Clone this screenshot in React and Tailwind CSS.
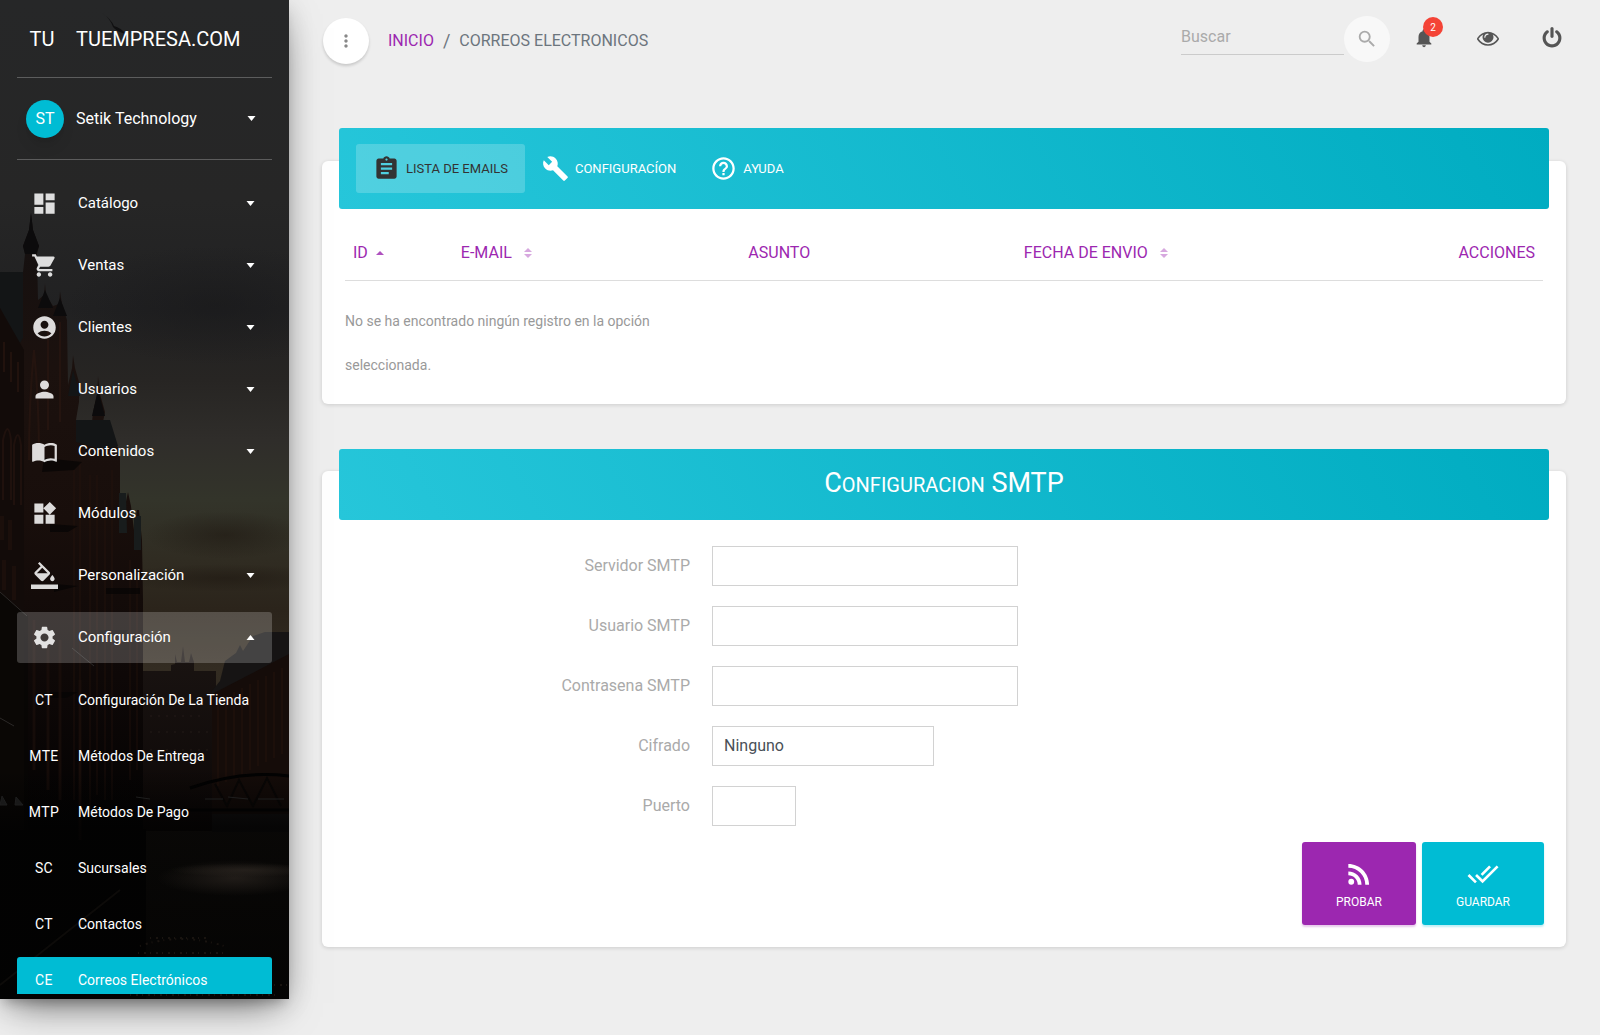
import { useState } from 'react';
import {
  MdAccountCircle,
  MdAssignment,
  MdBuild,
  MdDashboard,
  MdDoneAll,
  MdHelpOutline,
  MdImportContacts,
  MdMoreVert,
  MdNotifications,
  MdPerson,
  MdRssFeed,
  MdSearch,
  MdSettings,
  MdShoppingCart,
  MdWidgets,
} from 'react-icons/md';

function ColorFillIcon({ className }) {
  return (
    <svg viewBox="0 0 24 24" fill="currentColor" className={className} aria-hidden="true">
      <path d="M16.56 8.94L7.62 0 6.21 1.41l2.38 2.38-5.15 5.15c-.59.59-.59 1.54 0 2.12l5.5 5.5c.29.29.68.44 1.06.44s.77-.15 1.06-.44l5.5-5.5c.59-.58.59-1.53 0-2.12zM5.21 10L10 5.21 14.79 10H5.21zM19 11.5s-2 2.17-2 3.5c0 1.1.9 2 2 2s2-.9 2-2c0-1.33-2-3.5-2-3.5z" />
      <path d="M0 20h24v4H0z" />
    </svg>
  );
}

function EyeIcon({ className }) {
  return (
    <svg viewBox="0 0 1792 1792" fill="currentColor" className={className} aria-hidden="true">
      <path d="M1664 960q-152-236-381-353 61 104 61 225 0 185-131.5 316.5t-316.5 131.5-316.5-131.5-131.5-316.5q0-121 61-225-229 117-381 353 133 205 333.5 326.5t434.5 121.5 434.5-121.5 333.5-326.5zm-720-384q0-20-14-34t-34-14q-125 0-214.5 89.5t-89.5 214.5q0 20 14 34t34 14 34-14 14-34q0-86 61-147t147-61q20 0 34-14t14-34zm848 384q0 34-20 69-140 230-376.5 368.5t-499.5 138.5-499.5-139-376.5-368q-20-35-20-69t20-69q140-229 376.5-368t499.5-139 499.5 139 376.5 368q20 35 20 69z" />
    </svg>
  );
}

function PowerIcon({ className }) {
  return (
    <svg viewBox="0 0 1792 1792" fill="currentColor" className={className} aria-hidden="true">
      <path d="M1664 896q0 156-61 298t-164 245-245 164-298 61-298-61-245-164-164-245-61-298q0-182 80.5-343t226.5-270q43-32 95.5-25t83.5 50q32 42 24.5 94.5t-49.5 84.5q-98 74-151.5 181t-53.5 228q0 104 40.5 198.5t109.5 163.5 163.5 109.5 198.5 40.5 198.5-40.5 163.5-109.5 109.5-163.5 40.5-198.5q0-121-53.5-228t-151.5-181q-42-32-49.5-84.5t24.5-94.5q31-43 84-50t95 25q146 109 226.5 270t80.5 343zm-640-768v640q0 52-38 90t-90 38-90-38-38-90v-640q0-52 38-90t90-38 90 38 38 90z" />
    </svg>
  );
}

function Caret({ up = false }) {
  return (
    <svg viewBox="0 0 8 5" fill="currentColor" className="h-[5px] w-[9px] shrink-0" aria-hidden="true">
      <path d={up ? 'M0 5l4-5 4 5z' : 'M0 0h8L4 5z'} />
    </svg>
  );
}

function SortIcon({ active = false }) {
  if (active) {
    return (
      <svg viewBox="0 0 8 10" fill="currentColor" className="h-[10px] w-2 opacity-80" aria-hidden="true">
        <path d="M0 7l4-4 4 4z" />
      </svg>
    );
  }
  return (
    <svg viewBox="0 0 8 10" fill="currentColor" className="h-[10px] w-2 opacity-40" aria-hidden="true">
      <path d="M0 4l4-4 4 4zM0 6h8l-4 4z" />
    </svg>
  );
}

const MENU = [
  { label: 'Catálogo', icon: MdDashboard, children: true },
  { label: 'Ventas', icon: MdShoppingCart, children: true },
  { label: 'Clientes', icon: MdAccountCircle, children: true },
  { label: 'Usuarios', icon: MdPerson, children: true },
  { label: 'Contenidos', icon: MdImportContacts, children: true },
  { label: 'Módulos', icon: MdWidgets, children: false },
  { label: 'Personalización', icon: ColorFillIcon, children: true },
  { label: 'Configuración', icon: MdSettings, children: true },
];

const SUBMENU = [
  { short: 'CT', label: 'Configuración De La Tienda' },
  { short: 'MTE', label: 'Métodos De Entrega' },
  { short: 'MTP', label: 'Métodos De Pago' },
  { short: 'SC', label: 'Sucursales' },
  { short: 'CT', label: 'Contactos' },
  { short: 'CE', label: 'Correos Electrónicos', active: true },
];

const TABS = [
  { id: 'lista', label: 'LISTA DE EMAILS', icon: MdAssignment },
  { id: 'config', label: 'CONFIGURACÍON', icon: MdBuild },
  { id: 'ayuda', label: 'AYUDA', icon: MdHelpOutline },
];

const FIELDS = [
  { id: 'servidor', label: 'Servidor SMTP', type: 'text', width: 'w-[306px]' },
  { id: 'usuario', label: 'Usuario SMTP', type: 'text', width: 'w-[306px]' },
  { id: 'contrasena', label: 'Contrasena SMTP', type: 'password', width: 'w-[306px]' },
  { id: 'cifrado', label: 'Cifrado', type: 'select', width: 'w-[222px]' },
  { id: 'puerto', label: 'Puerto', type: 'text', width: 'w-[84px]' },
];

const BAYS = [0, 1, 2, 3, 4, 5, 6, 7, 8];

// Warehouses along a canal at dusk, behind the menu
function SidebarBackdrop() {
  return (
    <svg
      viewBox="0 0 289 999"
      preserveAspectRatio="xMidYMid slice"
      className="absolute inset-0 h-full w-full"
      aria-hidden="true"
    >
      <defs>
        <linearGradient id="sky" x1="0" y1="0" x2="0" y2="1">
          <stop offset="0" stopColor="#262728" />
          <stop offset="0.2" stopColor="#262626" />
          <stop offset="0.31" stopColor="#212122" />
          <stop offset="0.38" stopColor="#272523" />
          <stop offset="0.44" stopColor="#2f2d2a" />
          <stop offset="0.5" stopColor="#33342a" />
          <stop offset="0.56" stopColor="#302c22" />
          <stop offset="0.61" stopColor="#2b241b" />
          <stop offset="0.67" stopColor="#332c22" />
          <stop offset="1" stopColor="#14100d" />
        </linearGradient>
        <linearGradient id="brick" x1="0" y1="0" x2="0" y2="1">
          <stop offset="0" stopColor="#141010" />
          <stop offset="0.25" stopColor="#1b110e" />
          <stop offset="0.5" stopColor="#180e0b" />
          <stop offset="0.75" stopColor="#0e0807" />
          <stop offset="1" stopColor="#030202" />
        </linearGradient>
        <linearGradient id="bank" x1="0" y1="0" x2="0" y2="1">
          <stop offset="0" stopColor="#1a1412" />
          <stop offset="1" stopColor="#0c0706" />
        </linearGradient>
        <linearGradient id="canal" x1="0" y1="0" x2="0" y2="1">
          <stop offset="0" stopColor="#020202" stopOpacity="0" />
          <stop offset="0.25" stopColor="#020202" stopOpacity="0.8" />
          <stop offset="1" stopColor="#020202" stopOpacity="0.85" />
        </linearGradient>
        <radialGradient id="cloud">
          <stop offset="0" stopColor="#161618" stopOpacity="0.5" />
          <stop offset="1" stopColor="#161618" stopOpacity="0" />
        </radialGradient>
        <radialGradient id="dusk">
          <stop offset="0" stopColor="#1c150f" stopOpacity="0.5" />
          <stop offset="1" stopColor="#1c150f" stopOpacity="0" />
        </radialGradient>
        <radialGradient id="water">
          <stop offset="0" stopColor="#2b2520" stopOpacity="0.7" />
          <stop offset="1" stopColor="#2b2520" stopOpacity="0" />
        </radialGradient>
      </defs>
      <rect width="289" height="999" fill="url(#sky)" />
      <ellipse cx="215" cy="305" rx="150" ry="60" fill="url(#cloud)" />
      <ellipse cx="225" cy="535" rx="80" ry="24" fill="url(#dusk)" />
      <ellipse cx="225" cy="578" rx="110" ry="14" fill="url(#dusk)" />
      <path d="M102 13q9 6 12 13 7 2 12 8-9-2-13-7-3-9-11-14z" fill="#101011" />

      {/* far bank */}
      <path d="M140 671h31v-6l4-1v-10l2 8h4l2-16 2 16h4l2-9 3 9v9h22v160h-75z" fill="url(#bank)" />
      <path d="M212 691l8-10 5-20 11-8 4-8 3 6 10-15 12-4h24v200h-77z" fill="#161414" />
      <path d="M212 694l77-40v160h-77z" fill="#150c09" />
      {BAYS.map((i) => (
        <path key={i} d="M218 700v86" transform={`translate(${i * 8} ${-i * 4})`} stroke="#35190f" opacity="0.5" />
      ))}
      <path d="M150 702h55M150 716h55M150 732h60M150 750h60" stroke="#332722" strokeDasharray="2 6" opacity="0.5" />

      {/* towers on the left */}
      <path
        d="M0 272L23 272L25 254L23 246L29 230L31 213L33 230L39 246L37 254L38 300L44 295L45 283L46 295L53 306L59 304L60 291L62 304L67 320L68 385L72 368L73 355L75 368L79 382L79 402L76 420L92 422L93 412L97 394L98 376L100 394L105 412L103 422L110 425L112 440L120 450L120 506L125 506L128 492L131 506L134 530L137 510L139 510L142 540L143 600L143 830L0 830Z"
        fill="url(#brick)"
      />
      <rect y="829" width="146" height="170" fill="#040302" />
      <path d="M0 272h23v66l-6 10L0 308zM68 396l5-26 7 26zM76 420h34l8 26-14 4-28-8z" fill="#131516" />
      <path d="M23 246l6-16 2-17 2 17 6 16-3 8H25zM38 308l7-18 8 18zM53 316l7-18 7 18zM92 416l6-26 7 26z" fill="#0c0b0c" />
      <path d="M119 493h7l1 40h-8zM134 516h7v34h-7z" fill="#181c1c" />
      <path d="M0 308l24 42v480H0z" fill="#120b09" />
      <path d="M4 342v30M11 352v30M18 362v30M34 350q-5 50-5 110M34 350q5 50 5 110M48 330v100M60 322v100" stroke="#2b1811" strokeWidth="2" fill="none" opacity="0.6" />
      <path d="M3 500v-60q5-22 8 0v60M14 505v-60q4-20 7 0v60" stroke="#2b1811" strokeWidth="2" fill="none" opacity="0.5" />
      <path d="M74 470v330M80 462v350M90 475v340M97 475v320M105 500v300M112 470v330M130 560v220M137 570v200" stroke="#2b160f" opacity="0.6" />
      <path d="M44 458l38 4-8 8-32 2zM50 524l28 2-10 6H50zM54 584l24 2-24 6zM106 588h34v6h-34zM100 630h28l-4 5h-24zM46 692h32l-12 6H46z" fill="#060404" opacity="0.7" />
      <path d="M2 516v24M10 520v30M4 560v30M14 566v34" stroke="#24140e" strokeWidth="4" opacity="0.5" />
      <path d="M0 592l28 24v214H0z" fill="#070504" opacity="0.7" />
      <path d="M0 592l27 24M72 648l22 18M0 718l14 8" stroke="#2c2928" />
      <path d="M34 620v150M48 640v150M60 640v160M80 680v160" stroke="#1b0f0b" strokeWidth="3" opacity="0.7" />

      {/* canal and bridge */}
      <rect y="770" width="289" height="229" fill="url(#canal)" />
      <path d="M190 788q50-18 99-12M132 810h157" stroke="#020202" strokeWidth="3" fill="none" />
      <path d="M215 784l12 22 12-26 14 26 14-28 14 28" stroke="#040404" strokeWidth="2" fill="none" opacity="0.7" />
      <path d="M0 805h7l-5-9zM15 805h8l-7-8zM136 797l14 2M205 799h18M228 797l20 2M258 799h26" stroke="#1e1e1e" fill="#191919" />
      <ellipse cx="235" cy="878" rx="78" ry="18" fill="url(#water)" />
      <ellipse cx="245" cy="870" rx="74" ry="7" fill="url(#water)" />
      <path d="M140 946q40-14 84 0M138 953h90M150 938h60M250 985h39M130 995h150" stroke="#221b15" strokeWidth="2" strokeDasharray="1 5 2 4" fill="none" opacity="0.7" />
      <path d="M0 985L120 890" stroke="#0d0b09" strokeWidth="2" />
    </svg>
  );
}

function Sidebar() {
  const [open, setOpen] = useState('Configuración');

  return (
    <aside className="relative z-10 flex h-[calc(100vh-36px)] w-[289px] shrink-0 flex-col bg-black text-white shadow-[0_16px_38px_-12px_rgba(0,0,0,0.56),0_4px_25px_0_rgba(0,0,0,0.12),0_8px_10px_-5px_rgba(0,0,0,0.2)]">
      <SidebarBackdrop />
      <div className="relative mx-[17px] flex h-[78px] shrink-0 items-center border-b border-white/25 text-xl">
        <a href="#inicio" className="flex items-center">
          <span className="w-[50px] text-center">TU</span>
          <span className="pl-[9px]">TUEMPRESA.COM</span>
        </a>
      </div>
      <div className="relative mx-[17px] h-[82px] shrink-0 border-b border-white/25">
        <button type="button" className="flex h-full w-full items-center pr-4 pl-[9px] text-left">
          <span className="flex size-[38px] items-center justify-center rounded-full bg-[#00bcd4] shadow-lg">ST</span>
          <span className="flex-1 pl-3">Setik Technology</span>
          <Caret />
        </button>
      </div>
      <nav className="relative mx-[17px] mb-[5px] min-h-0 flex-1 overflow-hidden pt-[7px]">
        <ul>
          {MENU.map(({ label, icon: Icon, children }) => (
            <li key={label} className="mt-[11px]">
              <button
                type="button"
                onClick={() => setOpen(open === label ? null : label)}
                className={`flex h-[51px] w-full items-center rounded-[3px] pr-[17px] pl-[14px] text-left text-[15px] ${
                  open === label ? 'bg-white/20' : 'hover:bg-white/10'
                }`}
              >
                <Icon className="size-[27px] shrink-0 text-white/85" />
                <span className="flex-1 pl-5">{label}</span>
                {children && <Caret up={open === label} />}
              </button>
            </li>
          ))}
        </ul>
        {open === 'Configuración' && (
          <ul className="pt-[3px]">
            {SUBMENU.map(({ short, label, active }) => (
              <li key={label} className="mt-[11px]">
                <a
                  href="#configuracion"
                  className={`flex h-[45px] items-center rounded-[3px] text-sm ${
                    active ? 'bg-[#00bcd4]' : 'hover:bg-white/10'
                  }`}
                >
                  <span className="w-[54px] text-center tracking-wide">{short}</span>
                  <span className="pl-[7px] whitespace-nowrap">{label}</span>
                </a>
              </li>
            ))}
          </ul>
        )}
      </nav>
    </aside>
  );
}

function TopBar() {
  return (
    <header className="flex items-center pt-4">
      <button
        type="button"
        aria-label="Menú"
        className="ml-px flex size-[46px] items-center justify-center rounded-full bg-white text-[#888] shadow-[0_2px_3px_rgba(0,0,0,0.16)]"
      >
        <MdMoreVert className="size-5" />
      </button>
      <nav className="flex items-center gap-[9px] pl-[19px] text-[#6c757d]">
        <a href="#inicio" className="text-[#9c27b0]">
          INICIO
        </a>
        <span className="text-lg">/</span>
        <span>CORREOS ELECTRONICOS</span>
      </nav>
      <form className="mb-1 ml-auto flex items-center">
        <input
          type="text"
          aria-label="Buscar"
          placeholder="Buscar"
          className="h-8 w-[163px] border-b border-[#cbcbcb] bg-transparent pb-1 outline-none placeholder:text-[#aaa]"
        />
        <button
          type="button"
          aria-label="Buscar"
          className="flex size-[46px] items-center justify-center rounded-full bg-[#f8f8f8] text-[#aaa]"
        >
          <MdSearch className="size-[22px]" />
        </button>
      </form>
      <div className="mb-[6px] flex items-center gap-[42px] pr-[3px] pl-[23px] text-[#555]">
        <button type="button" aria-label="Notificaciones" className="relative">
          <MdNotifications className="size-[22px]" />
          <span className="absolute -top-[10px] left-[10px] flex size-5 items-center justify-center rounded-full bg-[#f44336] text-[10px] text-white">
            2
          </span>
        </button>
        <button type="button" aria-label="Ver tienda">
          <EyeIcon className="size-[22px]" />
        </button>
        <button type="button" aria-label="Salir">
          <PowerIcon className="size-[22px]" />
        </button>
      </div>
    </header>
  );
}

function EmailsCard() {
  const [tab, setTab] = useState('lista');

  return (
    <section className="mt-[95px] flex flex-col rounded-md bg-white pb-[17px] shadow-[0_1px_4px_0_rgba(0,0,0,0.14)]">
      <div className="mx-[17px] -mt-[33px] flex items-center rounded-[3px] bg-[linear-gradient(60deg,#26c6da,#00acc1)] px-[17px] py-4">
        {TABS.map(({ id, label, icon: Icon }) => (
          <button
            key={id}
            type="button"
            onClick={() => setTab(id)}
            className={`flex h-[49px] items-center gap-[6px] rounded-[3px] px-[17px] text-[13px] ${
              tab === id ? 'bg-white/20 text-[#333]' : 'text-white'
            }`}
          >
            <Icon className="size-[27px]" />
            {label}
          </button>
        ))}
      </div>
      <div className="mt-5 px-[23px]">
        <table className="w-full table-fixed border-collapse text-left">
          <thead>
            <tr className="border-b border-[#ddd] text-[#9c27b0]">
              <th className="w-[9%] px-2 pt-3 pb-[15px] font-normal">
                <span className="flex items-center gap-2">
                  ID <SortIcon active />
                </span>
              </th>
              <th className="w-[24%] px-2 pt-3 pb-[15px] font-normal">
                <span className="flex items-center gap-3">
                  E-MAIL <SortIcon />
                </span>
              </th>
              <th className="w-[23%] px-2 pt-3 pb-[15px] font-normal">ASUNTO</th>
              <th className="w-[23%] px-2 pt-3 pb-[15px] font-normal">
                <span className="flex items-center gap-3">
                  FECHA DE ENVIO <SortIcon />
                </span>
              </th>
              <th className="px-2 pt-3 pb-[15px] text-right font-normal">ACCIONES</th>
            </tr>
          </thead>
          <tbody>
            <tr>
              <td colSpan={5} className="pt-[18px]">
                <p className="max-w-[360px] text-sm leading-[44px] text-[#999]">
                  No se ha encontrado ningún registro en la opción seleccionada.
                </p>
              </td>
            </tr>
          </tbody>
        </table>
      </div>
    </section>
  );
}

function SmtpCard() {
  return (
    <section className="mt-[67px] flex flex-col rounded-md bg-white pb-[22px] shadow-[0_1px_4px_0_rgba(0,0,0,0.14)]">
      <div className="mx-[17px] -mt-[22px] flex h-[71px] items-center justify-center rounded-[3px] bg-[linear-gradient(60deg,#26c6da,#00acc1)]">
        <h2 className="text-[27px] leading-none text-white">
          C<span className="text-xl uppercase">onfiguracion</span> SMTP
        </h2>
      </div>
      <form className="px-[22px] pt-[26px]">
        <div className="flex flex-col gap-5">
          {FIELDS.map(({ id, label, type, width }) => (
            <div key={id} className="flex items-center gap-5">
              <label htmlFor={id} className="w-[29%] pr-[2px] text-right text-[#aaa]">
                {label}
              </label>
              {type === 'select' ? (
                <select
                  id={id}
                  className={`h-10 appearance-none border border-[#d2d2d2] bg-white px-[11px] text-[#495057] ${width}`}
                >
                  <option>Ninguno</option>
                  <option>SSL</option>
                  <option>TLS</option>
                </select>
              ) : (
                <input
                  id={id}
                  type={type}
                  className={`h-10 border border-[#d2d2d2] bg-white px-[11px] text-[#495057] ${width}`}
                />
              )}
            </div>
          ))}
        </div>
        <div className="mt-4 flex justify-end gap-[6px]">
          <button
            type="button"
            className="flex h-[83px] w-[114px] flex-col items-center justify-center gap-1 rounded-[3px] bg-[#9c27b0] text-xs text-white shadow-[0_2px_2px_0_rgba(156,39,176,0.25)]"
          >
            <MdRssFeed className="size-8" />
            PROBAR
          </button>
          <button
            type="button"
            className="flex h-[83px] w-[122px] flex-col items-center justify-center gap-1 rounded-[3px] bg-[#00bcd4] text-xs text-white shadow-[0_2px_2px_0_rgba(0,188,212,0.25)]"
          >
            <MdDoneAll className="size-8" />
            GUARDAR
          </button>
        </div>
      </form>
    </section>
  );
}

export default function App() {
  return (
    <div className="flex min-h-screen bg-[#eee] font-['Roboto',sans-serif] text-base text-[#333]">
      <Sidebar />
      <main className="min-w-0 flex-1 pr-[34px] pl-[33px]">
        <TopBar />
        <EmailsCard />
        <SmtpCard />
      </main>
    </div>
  );
}
